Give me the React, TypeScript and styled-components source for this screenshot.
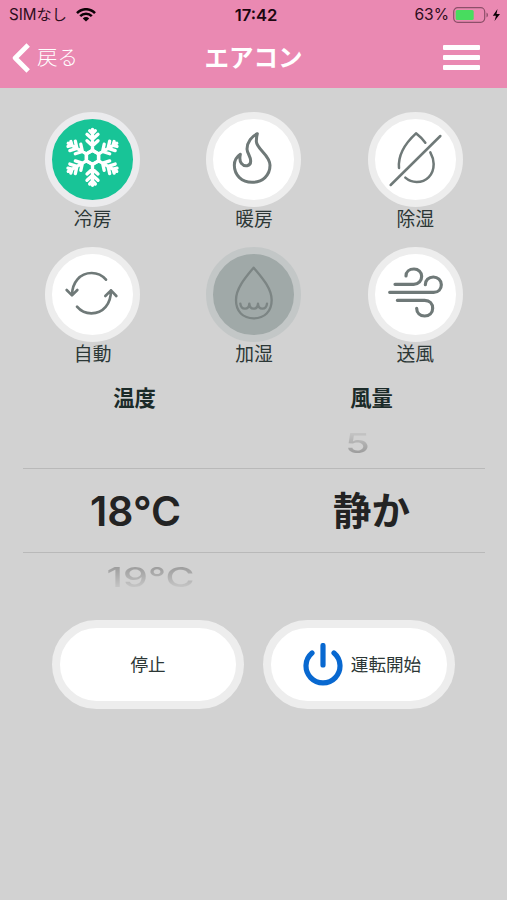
import React from "react";
import styled, { createGlobalStyle } from "styled-components";

const GlobalStyle = createGlobalStyle`
  * { box-sizing: border-box; }
  body {
    margin: 0;
    background: #d2d2d2;
    font-family: Inter, "Noto Sans CJK JP", sans-serif;
    color: #2c3736;
  }
  button { font: inherit; color: inherit; padding: 0; margin: 0; }
  svg { display: block; flex: none; }
`;

const Screen = styled.div`
  width: 507px;
  height: 900px;
  background: #d2d2d2;
  overflow: hidden;
`;

const Header = styled.header`
  height: 88px;
  background: #ea89b2;
`;

const StatusBar = styled.div`
  height: 30px;
  display: grid;
  grid-template-columns: 1fr 60px 1fr;
  align-items: center;
  padding: 0 6px 0 9px;
  font-size: 16px;
  line-height: 30px;
  white-space: nowrap;
  color: #2e0d1c;
`;

const Carrier = styled.div`
  display: flex;
  align-items: center;
  gap: 9px;
  font-size: 15.2px;
`;

const Clock = styled.div`
  text-align: center;
  font-weight: 600;
  font-size: 16.6px;
  padding-left: 2px;
  color: #1c0610;
`;

const Power = styled.div`
  display: flex;
  align-items: center;
  justify-content: flex-end;
  gap: 4px;
  font-size: 15.6px;
`;

const NavBar = styled.nav`
  height: 54px;
  display: grid;
  grid-template-columns: 120px 1fr 120px;
  align-items: center;
  color: #fff;
`;

const Back = styled.button`
  display: flex;
  align-items: center;
  gap: 7px;
  padding: 2px 0 0 12px;
  border: 0;
  background: none;
  color: #fff;
  font-size: 20.5px;
  font-weight: 300;
  line-height: 30px;
`;

const Title = styled.h1`
  margin: 0;
  padding-top: 2px;
  text-align: center;
  font-size: 24.5px;
  line-height: 34px;
  font-weight: 700;
`;

const MenuButton = styled.button`
  justify-self: end;
  width: 37px;
  margin-right: 27px;
  display: grid;
  gap: 5px;
  border: 0;
  background: none;
`;

const MenuBar = styled.span`
  height: 5px;
  border-radius: 1px;
  background: #fff;
`;

const Modes = styled.section`
  display: grid;
  grid-template-columns: repeat(3, 161.3px);
  grid-auto-rows: 135px;
  padding: 24px 11px 0 12px;
`;

const Mode = styled.div`
  display: flex;
  flex-direction: column;
  align-items: center;
`;

type Tone = "plain" | "active" | "disabled";
const fills = { plain: "#fff", active: "#18c497", disabled: "#a0a9a8" };
const rings = { plain: "#ededed", active: "#ebebed", disabled: "#c3c7c7" };

const ModeButton = styled.button<{ $tone: Tone }>`
  width: 95px;
  height: 95px;
  border: 7px solid ${(p) => rings[p.$tone]};
  border-radius: 50%;
  background: ${(p) => fills[p.$tone]};
  color: ${(p) => (p.$tone === "active" ? "#fff" : p.$tone === "disabled" ? "#7c8584" : "#6f7978")};
`;

const ModeLabel = styled.div`
  font-size: 18.8px;
  line-height: 26px;
`;

const Headings = styled.div`
  display: grid;
  grid-template-columns: 237px 237px;
  padding-left: 16px;
`;

const Heading = styled.h2`
  margin: 0;
  text-align: center;
  font-size: 21.3px;
  line-height: 32px;
  font-weight: 700;
  color: #1b2b29;
`;

const Picker = styled.section`
  width: 462px;
  margin: 2px 0 0 23px;
`;

const PickerRow = styled.div<{ $height: number; $selected?: boolean }>`
  height: ${(p) => p.$height}px;
  display: grid;
  grid-template-columns: 225px 237px;
  align-items: center;
  border: solid #b9b9b9;
  border-width: ${(p) => (p.$selected ? "1.5px 0" : "0")};
`;

const Choice = styled.div<{ $kanji?: boolean }>`
  text-align: center;
  font-size: ${(p) => (p.$kanji ? 38.5 : 40.8)}px;
  line-height: 50px;
  font-weight: ${(p) => (p.$kanji ? 700 : 600)};
  padding-left: ${(p) => (p.$kanji ? 10 : 0)}px;
  color: #232323;
`;

const Faded = styled.div<{ $edge: "top" | "bottom" }>`
  text-align: center;
  grid-column: ${(p) => (p.$edge === "top" ? 2 : 1)};
  font-size: 36px;
  line-height: 40px;
  font-weight: 500;
  color: transparent;
  background: linear-gradient(
    ${(p) => (p.$edge === "top" ? "to top" : "to bottom")}, #9c9c9c 15%, #c6c6c6 85%);
  background-clip: text;
  transform: ${(p) => (p.$edge === "top" ? "translate(-9px, 1px)" : "translate(15px, 3px)")}
    scale(1.1, 0.75);
`;

const Actions = styled.div`
  display: flex;
  gap: 19px;
  padding: 25px 0 0 52px;
`;

const Action = styled.button`
  width: 192px;
  height: 89px;
  border: 8px solid #ededed;
  border-radius: 45px;
  background: #fff;
  display: flex;
  align-items: center;
  justify-content: center;
  font-size: 17.6px;
  line-height: 26px;
`;

const ActionContent = styled.span`
  display: flex;
  align-items: center;
  gap: 8px;
  padding-left: 6px;
`;

const Glyph = ({ x, w = 8, children }: { x: number; w?: number; children: React.ReactNode }) => (
  <svg width="81" height="81" viewBox={`${x} 42 243 243`} fill="none" stroke="currentColor"
    strokeWidth={w} strokeLinecap="round" strokeLinejoin="round">
    {children}
  </svg>
);

const Snowflake = () => (
  <Glyph x={52} w={10}>
    {[0, 60, 120, 180, 240, 300].map((a) => (
      <g key={a} transform={`rotate(${a} 173.5 157)`}>
        <path d="M173.5 136V73M165 77l8.5 9 8.5-9M157 88l16.5 15 16.5-15M157 107l16.5 15 16.5-15" />
        <path d="M155 146.5L173.5 136L192 146.5" />
      </g>
    ))}
  </Glyph>
);

const Flame = () => (
  <Glyph x={54} w={9}>
    <path d="M187 86C171 93 156 112 156 132C156 144 168 155 167 169C167 185 148 186 140 176C133 168 134 157 136 148C121 158 118 170 118 181C118 211 141 232 171 232C203 232 225 211 225 181C225 149 185 133 184 109C184 100 185 93 187 86Z" />
  </Glyph>
);

const Dry = () => (
  <Glyph x={60} w={7.5}>
    <path d="M107 240L256 93M132 189C128 145 158 108 183 85C193 93 203 102 211 113M226 142C232 153 236 165 236 177C236 210 214 231 185 231C171 231 160 226 151 218" />
  </Glyph>
);

const Auto = () => (
  <Glyph x={52}>
    <path d="M214 119C202 105 187 99 171 99C136 99 112 127 112 166M96 150L112 166L128 150M127 200C138 213 153 220 170 220C206 220 229 192 229 151M212 168L229 151L245 168" />
  </Glyph>
);

const Humidify = () => (
  <Glyph x={55} w={7}>
    <path d="M177 83C160 104 124 142 124 180C124 215 145 235 177 235C209 235 231 215 231 180C231 142 194 104 177 83Z" />
    <path d="M137 191C139 211 163 211 164 191C165 211 189 211 190 191C191 211 215 211 217 191" />
  </Glyph>
);

const Wind = () => (
  <Glyph x={60} w={9.5}>
    <path d="M120 133H176C191 133 200 122 200 109C200 96 190 87 177 87C163 87 153 95 153 108" />
    <path d="M104 157H236C250 157 259 147 259 134C259 120 248 111 235 111C221 111 211 121 211 134" />
    <path d="M127 181H209C224 181 233 191 233 205C233 219 223 228 209 228C195 228 185 219 185 205" />
  </Glyph>
);

const WifiIcon = () => (
  <svg width="20" height="14" viewBox="0 0 20 14" fill="none" stroke="#0c0206" strokeWidth="2.5">
    <path d="M1 5.1C6-.1 14-.1 19 5.1M4.2 8.2C7.4 4.9 12.6 4.9 15.8 8.2" />
    <path d="M6.8 10.4C8.7 8.6 11.3 8.6 13.2 10.4L10 13.6Z" fill="#0c0206" stroke="none" />
  </svg>
);

const BatteryIcon = () => (
  <svg width="48" height="16" viewBox="0 0 48 16">
    <rect x="0.7" y="0.7" width="31" height="14.6" rx="4" fill="none" stroke="#8d4f69" strokeWidth="1.2" />
    <rect x="2.7" y="2.9" width="18" height="10.2" rx="1.5" fill="#48dc5f" />
    <path d="M33.5 5.5C35.5 6.5 35.5 9.5 33.5 10.5Z" fill="#8d4f69" />
    <path d="M44.5 2L39.8 8.7H43L41.5 14L47 7H43.5Z" fill="#0c0206" />
  </svg>
);

const Chevron = () => (
  <svg width="18" height="30" viewBox="0 0 18 30" fill="none" stroke="#fff" strokeWidth="4.8"
    strokeLinejoin="round">
    <path d="M16.2 2L3.2 15L16.2 28" />
  </svg>
);

const PowerIcon = () => (
  <svg width="40" height="44" viewBox="0 0 40 44" fill="none" stroke="#0868d0" strokeWidth="5.2" strokeLinecap="round">
    <path d="M20 2.5V22M9 10A17 17 0 1 0 31 10" />
  </svg>
);

const modes: { label: string; tone: Tone; icon: React.ReactNode }[] = [
  { label: "冷房", tone: "active", icon: <Snowflake /> },
  { label: "暖房", tone: "plain", icon: <Flame /> },
  { label: "除湿", tone: "plain", icon: <Dry /> },
  { label: "自動", tone: "plain", icon: <Auto /> },
  { label: "加湿", tone: "disabled", icon: <Humidify /> },
  { label: "送風", tone: "plain", icon: <Wind /> },
];

export default function App() {
  return (
    <Screen lang="ja">
      <GlobalStyle />
      <Header>
        <StatusBar>
          <Carrier>SIMなし<WifiIcon /></Carrier>
          <Clock>17:42</Clock>
          <Power>63%<BatteryIcon /></Power>
        </StatusBar>
        <NavBar>
          <Back><Chevron />戻る</Back>
          <Title>エアコン</Title>
          <MenuButton aria-label="メニュー"><MenuBar /><MenuBar /><MenuBar /></MenuButton>
        </NavBar>
      </Header>
      <Modes>
        {modes.map((m) => (
          <Mode key={m.label}>
            <ModeButton $tone={m.tone} aria-label={m.label}>{m.icon}</ModeButton>
            <ModeLabel>{m.label}</ModeLabel>
          </Mode>
        ))}
      </Modes>
      <Headings>
        <Heading>温度</Heading>
        <Heading>風量</Heading>
      </Headings>
      <Picker>
        <PickerRow $height={52}><Faded $edge="top">5</Faded></PickerRow>
        <PickerRow $height={85} $selected>
          <Choice>18°C</Choice>
          <Choice $kanji>静か</Choice>
        </PickerRow>
        <PickerRow $height={42}><Faded $edge="bottom">19°C</Faded></PickerRow>
      </Picker>
      <Actions>
        <Action>停止</Action>
        <Action><ActionContent><PowerIcon />運転開始</ActionContent></Action>
      </Actions>
    </Screen>
  );
}
